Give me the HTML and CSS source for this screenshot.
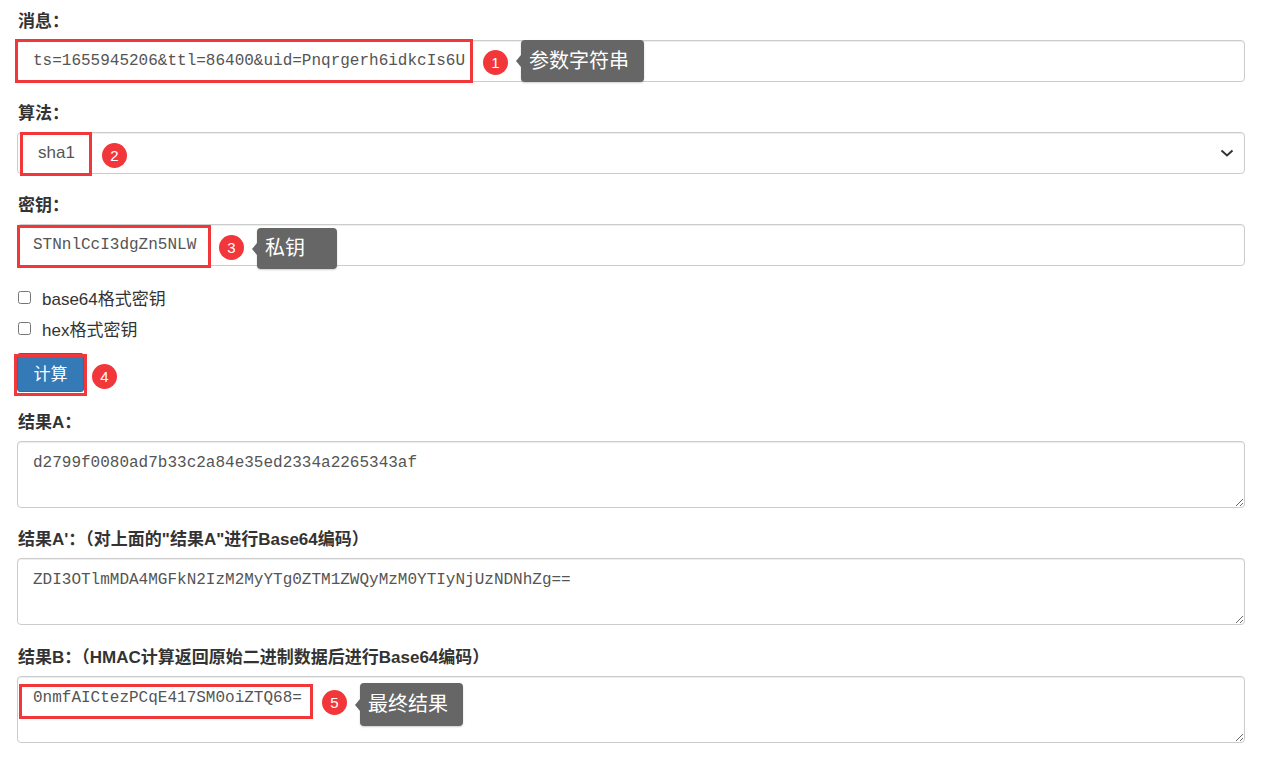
FILE: index.html
```html
<!DOCTYPE html>
<html lang="zh-CN">
<head>
<meta charset="utf-8">
<title>HMAC</title>
<link rel="stylesheet" href="styles.css">
</head>
<body>
<div class="page">
  <div class="group">
    <div class="lbl">消息：</div>
    <div class="wrap">
      <input class="ctl mono" type="text" value="ts=1655945206&amp;ttl=86400&amp;uid=Pnqrgerh6idkcIs6U" readonly>
      <div class="anno anno-1">
        <span class="hl"></span><span class="badge">1</span><span class="tip">参数字符串</span>
      </div>
    </div>
  </div>

  <div class="group">
    <div class="lbl">算法：</div>
    <div class="wrap">
      <div class="ctl select"><span>sha1</span>
        <svg class="chev" width="14" height="10" viewBox="0 0 14 10"><path d="M1.5 2.5 L7 7.5 L12.5 2.5" fill="none" stroke="#333" stroke-width="2"/></svg>
      </div>
      <div class="anno anno-2">
        <span class="hl"></span><span class="badge">2</span>
      </div>
    </div>
  </div>

  <div class="group">
    <div class="lbl">密钥：</div>
    <div class="wrap">
      <input class="ctl mono" type="text" value="STNnlCcI3dgZn5NLW" readonly>
      <div class="anno anno-3">
        <span class="hl"></span><span class="badge">3</span><span class="tip">私钥</span>
      </div>
    </div>
  </div>

  <div class="checks">
    <label class="check"><input type="checkbox"><span>base64格式密钥</span></label>
    <label class="check"><input type="checkbox"><span>hex格式密钥</span></label>
  </div>

  <div class="group btn-group">
    <div class="wrap wrap-btn">
      <button class="btn" type="button">计算</button>
      <div class="anno anno-4">
        <span class="hl"></span><span class="badge">4</span>
      </div>
    </div>
  </div>

  <div class="group">
    <div class="lbl">结果A：</div>
    <div class="wrap">
      <textarea class="ctl area mono" readonly>d2799f0080ad7b33c2a84e35ed2334a2265343af</textarea>
    </div>
  </div>

  <div class="group">
    <div class="lbl">结果A'：（对上面的"结果A"进行Base64编码）</div>
    <div class="wrap">
      <textarea class="ctl area mono" readonly>ZDI3OTlmMDA4MGFkN2IzM2MyYTg0ZTM1ZWQyMzM0YTIyNjUzNDNhZg==</textarea>
    </div>
  </div>

  <div class="group group-b">
    <div class="lbl">结果B：（HMAC计算返回原始二进制数据后进行Base64编码）</div>
    <div class="wrap">
      <textarea class="ctl area mono" readonly>0nmfAICtezPCqE417SM0oiZTQ68=</textarea>
      <div class="anno anno-5">
        <span class="hl"></span><span class="badge">5</span><span class="tip">最终结果</span>
      </div>
    </div>
  </div>
</div>
</body>
</html>
```

FILE: styles.css
```css
html, body {
  margin: 0;
  padding: 0;
  background: #fff;
}
body {
  font-family: "Liberation Sans", "Noto Sans CJK SC", sans-serif;
  color: #333;
}
.page {
  padding: 10px 17px 0 17px;
}
.group {
  margin-bottom: 20px;
}
.lbl {
  font-size: 17px;
  font-weight: bold;
  line-height: 24px;
  height: 24px;
  margin: 0 0 6px 1px;
  color: #333;
}
.wrap {
  position: relative;
}
.ctl {
  display: block;
  box-sizing: border-box;
  width: 100%;
  height: 42px;
  margin: 0;
  border: 1px solid #ccc;
  border-radius: 4px;
  background: #fff;
  box-shadow: inset 0 1px 1px rgba(0, 0, 0, 0.075);
  padding: 0 15px;
  color: #555;
  outline: none;
}
.mono {
  font-family: "Liberation Mono", "DejaVu Sans Mono", monospace;
  font-size: 16px;
}
.select {
  display: flex;
  align-items: center;
  justify-content: space-between;
  padding: 0 10px 0 20px;
  font-size: 17px;
  color: #555;
}
.chev {
  display: block;
}
.checks {
  display: flex;
  flex-direction: column;
  gap: 9px;
  margin-bottom: 14px;
}
.check {
  display: flex;
  align-items: center;
  height: 22px;
  font-size: 17px;
  color: #333;
}
.check input {
  width: 13px;
  height: 13px;
  margin: 0 11px 0 1px;
}
.btn-group {
  margin-bottom: 19px;
}
.wrap-btn {
  display: flex;
}
.btn {
  box-sizing: border-box;
  width: 67px;
  height: 39px;
  border: 1px solid #2e6da4;
  border-radius: 3px;
  background: #337ab7;
  color: #fff;
  font-family: "Liberation Sans", "Noto Sans CJK SC", sans-serif;
  font-size: 17px;
  padding: 0;
}
.area {
  height: 67px;
  padding: 10px 15px 8px;
  line-height: 22px;
  resize: vertical;
}
.group-b {
  margin-top: 21px;
}
.group:last-child {
  margin-bottom: 0;
}

/* annotation overlays */
.anno {
  position: absolute;
  display: flex;
  align-items: center;
  pointer-events: none;
}
.hl {
  box-sizing: border-box;
  border: 3px solid #f2373a;
  display: block;
}
.badge {
  width: 25px;
  height: 25px;
  border-radius: 50%;
  background: #f2373a;
  color: #fff;
  font-size: 15px;
  line-height: 25px;
  text-align: center;
  margin-top: 2px;
  margin-left: 10px;
  flex: none;
}
.tip {
  position: relative;
  box-sizing: border-box;
  height: 42px;
  min-width: 80px;
  margin-left: 13px;
  padding: 0 15px 0 8px;
  background: #666;
  color: #fff;
  border-radius: 4px;
  font-size: 20px;
  line-height: 42px;
  white-space: nowrap;
  box-shadow: 0 1px 2px rgba(0,0,0,0.2);
}
.tip::before {
  content: "";
  position: absolute;
  left: -5px;
  top: 50%;
  margin-top: -6px;
  border-top: 6px solid transparent;
  border-bottom: 6px solid transparent;
  border-right: 5px solid #666;
}
.anno-1 { left: -2px; top: -1px; }
.anno-1 .hl { width: 458px; height: 44px; }
.anno-2 { left: 3px; top: 0; }
.anno-2 .hl { width: 72px; height: 44px; }
.anno-3 { left: 0; top: 0; }
.anno-3 .hl { width: 194px; height: 43px; }
.anno-3 .badge { margin-left: 8px; }
.anno-3 .tip { height: 41px; line-height: 41px; margin-top: 4px; }
.anno-4 { left: -3px; top: 1px; }
.anno-4 .hl { width: 73px; height: 42px; }
.anno-4 .badge { margin-left: 5px; }
.anno-5 { left: 2px; top: 1px; }
.anno-5 .hl { width: 294px; height: 35px; }
.anno-5 .badge { margin-left: 9px; }
.anno-5 .tip { height: 43px; line-height: 43px; margin-top: 6px; }
```
